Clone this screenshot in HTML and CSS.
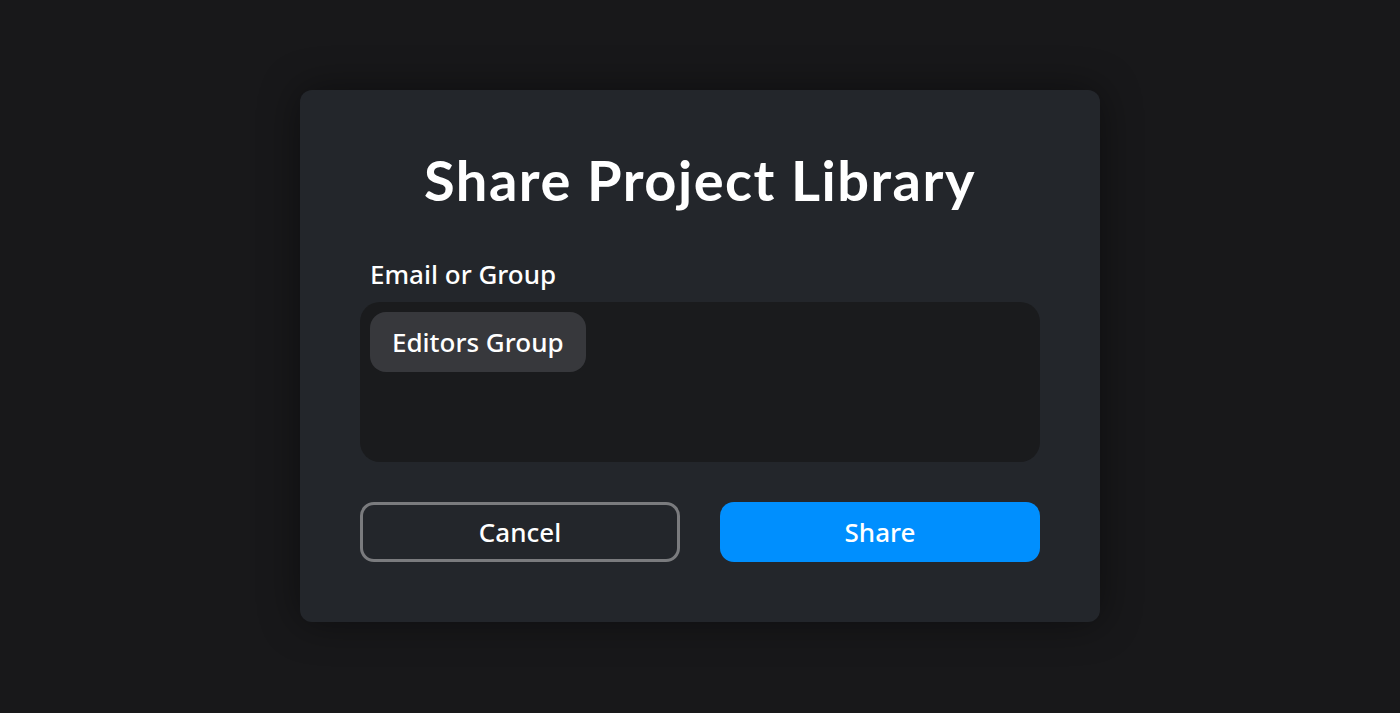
FILE: index.html
```html
<!DOCTYPE html>
<html lang="en">
<head>
    <meta charset="UTF-8">
    <meta name="viewport" content="width=device-width, initial-scale=1.0">
    <title>Share Project Library</title>
    <link rel="stylesheet" href="styles.css">
</head>
<body>
    <div class="overlay">
        <div class="dialog">
            <h1 class="dialog-title">Share Project Library</h1>
            <label class="field-label" for="recipients">Email or Group</label>
            <div class="recipients" id="recipients">
                <span class="chip">Editors Group</span>
            </div>
            <div class="actions">
                <button class="btn btn-cancel">Cancel</button>
                <button class="btn btn-share">Share</button>
            </div>
        </div>
    </div>
</body>
</html>
```

FILE: styles.css
```css
body {
    margin: 0;
    background: #18181a;
    font-family: "Noto Sans", "Open Sans", sans-serif;
    color: #fff;
}
.overlay {
    height: 713px;
    display: flex;
    justify-content: center;
    padding-top: 90px;
    box-sizing: border-box;
}
.dialog {
    width: 800px;
    height: 532px;
    box-sizing: border-box;
    padding: 0 60px;
    background: #23262b;
    border-radius: 12px;
    box-shadow: 0 0 40px rgba(0, 0, 0, 0.45);
    display: flex;
    flex-direction: column;
}
.dialog-title {
    margin: 60px 0 0;
    height: 72px;
    font-family: Lato, sans-serif;
    font-weight: 700;
    font-size: 56px;
    line-height: 60px;
    text-align: center;
    letter-spacing: 1.5px;
}
.field-label {
    margin: 37px 0 0 10px;
    font-size: 26px;
    font-weight: 500;
    line-height: 30px;
}
.recipients {
    margin-top: 13px;
    height: 160px;
    box-sizing: border-box;
    padding: 10px;
    background: #1a1b1d;
    border-radius: 20px;
    display: flex;
    align-items: flex-start;
}
.chip {
    height: 60px;
    padding: 0 22px;
    display: flex;
    align-items: center;
    background: #37383c;
    border-radius: 16px;
    font-size: 26px;
    font-weight: 500;
}
.actions {
    margin-top: 40px;
    display: flex;
    gap: 40px;
}
.btn {
    width: 320px;
    height: 60px;
    box-sizing: border-box;
    border-radius: 14px;
    font-family: "Noto Sans", "Open Sans", sans-serif;
    font-size: 26px;
    font-weight: 500;
    color: #fff;
    cursor: pointer;
}
.btn-cancel {
    background: transparent;
    border: 3px solid #7a7b7e;
}
.btn-share {
    background: #008ffe;
    border: none;
}
```
